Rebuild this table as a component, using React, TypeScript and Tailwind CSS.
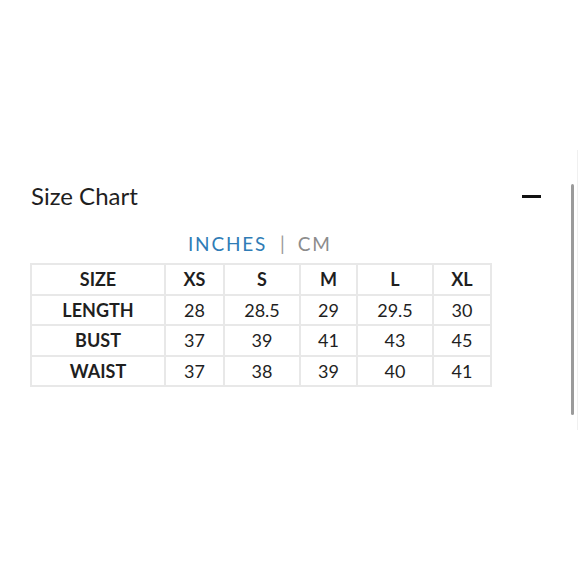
const sizes = ['XS', 'S', 'M', 'L', 'XL'];

const rows: { label: string; values: string[] }[] = [
  { label: 'LENGTH', values: ['28', '28.5', '29', '29.5', '30'] },
  { label: 'BUST', values: ['37', '39', '41', '43', '45'] },
  { label: 'WAIST', values: ['37', '38', '39', '40', '41'] },
];

const colWidths = ['w-[134px]', 'w-[59px]', 'w-[76px]', 'w-[57px]', 'w-[76px]', 'w-[58px]'];

const cell = 'border-2 border-[#e8e8e8] h-[30.5px] p-0 text-center align-middle';

export default function App() {
  return (
    <div className="relative w-[580px] h-[580px] bg-white text-[#1f1f1f] font-['Lato',sans-serif] overflow-hidden">
      <div className="pt-[180px] pl-[31px] pr-[39px]">
        <div className="flex items-center justify-between">
          <h2 className="text-[24px] leading-[32px] font-normal">Size Chart</h2>
          <span className="block w-[19px] h-[3px] bg-[#111] mt-[1px]" />
        </div>

        <div className="mt-[20px] flex items-center text-[19px] leading-[23px] tracking-[1.8px] pl-[157px]">
          <button className="text-[#2f7cb6]">INCHES</button>
          <span className="ml-[13px] mr-[11px] text-[#9a9a9a]">|</span>
          <button className="text-[#8c8c8c]">CM</button>
        </div>

        <table className="mt-[8px] -ml-[1px] border-collapse text-[18px] leading-[22px] table-fixed">
          <colgroup>
            {colWidths.map((w, i) => (
              <col key={i} className={w} />
            ))}
          </colgroup>
          <thead>
            <tr>
              <th className={`${cell} font-bold`}>SIZE</th>
              {sizes.map(s => (
                <th key={s} className={`${cell} font-bold`}>
                  {s}
                </th>
              ))}
            </tr>
          </thead>
          <tbody>
            {rows.map(r => (
              <tr key={r.label}>
                <td className={`${cell} font-bold`}>{r.label}</td>
                {r.values.map((v, i) => (
                  <td key={i} className={cell}>
                    {v}
                  </td>
                ))}
              </tr>
            ))}
          </tbody>
        </table>
      </div>

      {/* scroll indicator */}
      <div className="absolute left-[571px] top-[184px] w-[3px] h-[231px] bg-[#9b9b9b] rounded-full" />
      <div className="absolute left-[577px] top-[150px] w-px h-[280px] bg-[#f0f0f0]" />
    </div>
  );
}
